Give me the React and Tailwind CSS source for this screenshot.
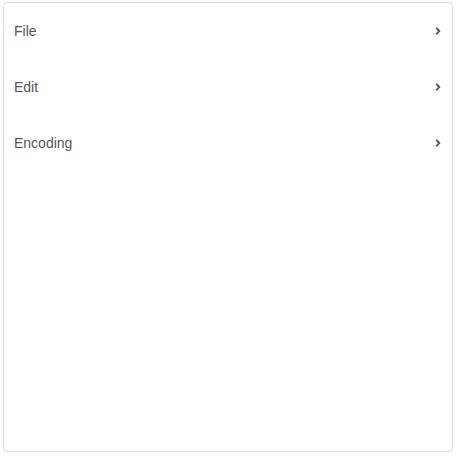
const ITEMS = ['File', 'Edit', 'Encoding'];

function Chevron() {
  return (
    <svg width="6" height="8" viewBox="0 0 6 8" className="shrink-0">
      <polyline points="1.2,0.8 4.4,4 1.2,7.2" fill="none" stroke="#555" strokeWidth="1.8" />
    </svg>
  );
}

export default function App() {
  return (
    <div className="w-[459px] h-[457px] bg-white pt-[2px] pl-[3px]" style={{ fontFamily: '"Liberation Sans", Arial, sans-serif' }}>
      <div className="w-[450px] h-[450px] border border-[#dcdcdc] rounded-[4px] bg-white">
        {ITEMS.map(label => (
          <div key={label} className="h-[56px] flex items-center justify-between pl-[10px] pr-[11px]">
            <span className="text-[14px] text-[#555]">{label}</span>
            <Chevron />
          </div>
        ))}
      </div>
    </div>
  );
}
